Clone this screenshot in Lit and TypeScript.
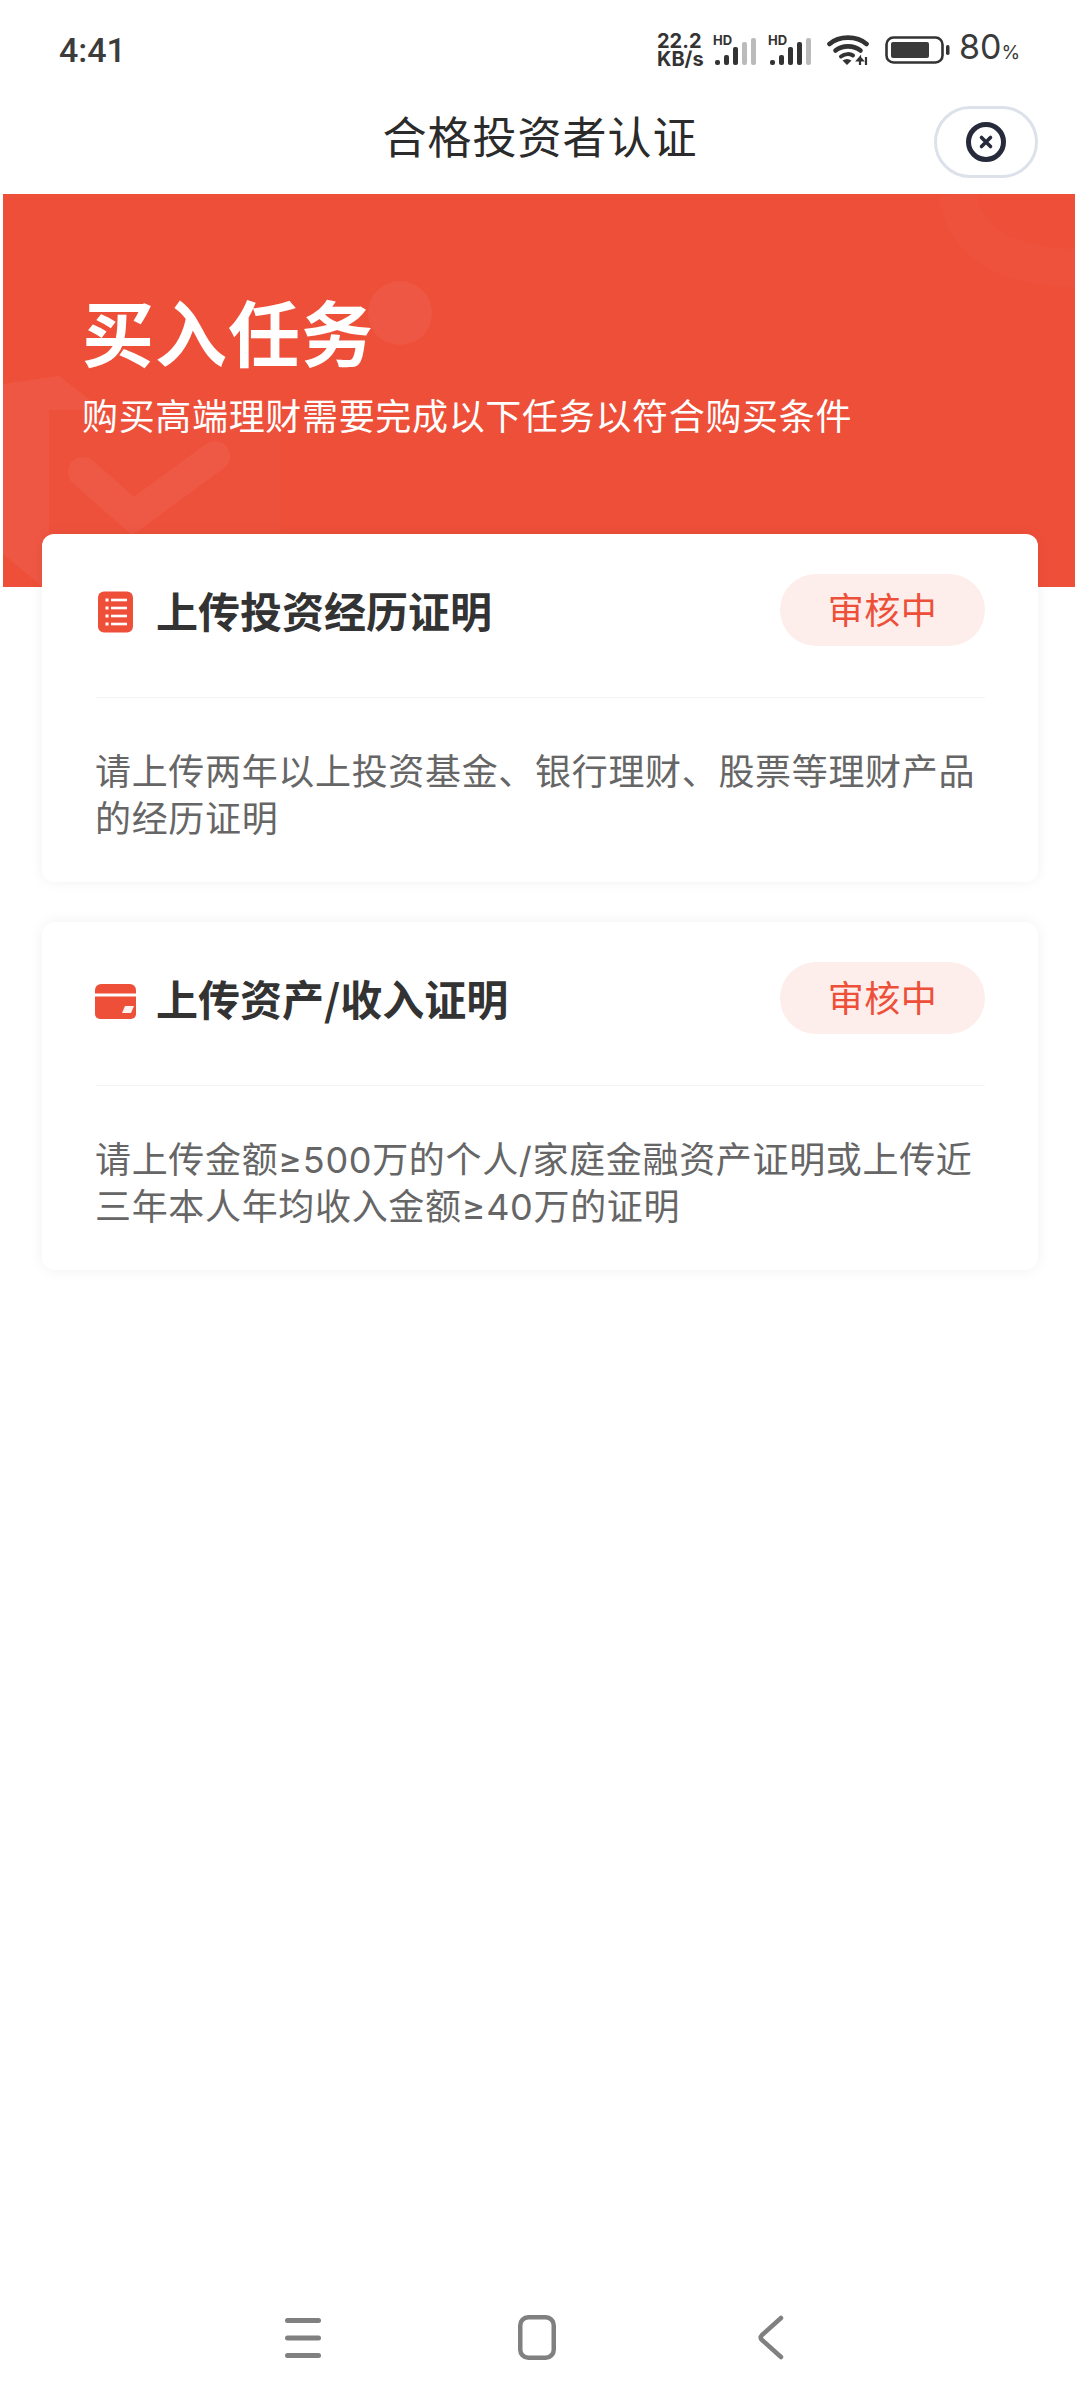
import { LitElement, css, html, svg } from "lit"
import { customElement } from "lit/decorators.js"

const tasks = [
  {
    icon: "list",
    title: "上传投资经历证明",
    lines: ["请上传两年以上投资基金、银行理财、股票等理财产品", "的经历证明"],
    status: "审核中",
  },
  {
    icon: "card",
    title: "上传资产/收入证明",
    lines: ["请上传金额≥500万的个人/家庭金融资产证明或上传近", "三年本人年均收入金额≥40万的证明"],
    status: "审核中",
  },
]

// 五格信号，dark 表示深色格数
const signal = (dark: number) =>
  [5, 10, 18, 23, 27].map(
    (h, i) => svg`<rect x="${i * 9}" y="${27 - h}" width="5" height="${h}" rx="2" fill="${i < dark ? "#333" : "#bbb"}"/>`
  )

@customElement("app-root")
export class AppRoot extends LitElement {
  renderStatusIcons() {
    return html`
      <div class="speed">${"22.2\nKB/s"}</div>
      <div class="sig">
        <span class="hd">HD</span>
        <svg width="42" height="27" viewBox="0 0 42 27">${signal(3)}</svg>
      </div>
      <div class="sig">
        <span class="hd">HD</span>
        <svg width="42" height="27" viewBox="0 0 42 27">${signal(4)}</svg>
      </div>
      <svg class="wifi" width="44" height="31" viewBox="0 0 44 31" fill="none" stroke="#333" stroke-linecap="round">
        <path d="M2.5 9C12 0.5 30 0.5 39.5 9" stroke-width="4.6"/>
        <path d="M8.5 15.5C15 10 27 10 33.5 15.5" stroke-width="4.6"/>
        <path d="M14 21.5C18 18.5 23 18.5 26 20.5" stroke-width="4"/>
        <path d="M15.5 25.5Q20 22.5 24.5 25.5L20 30Z" fill="#333" stroke="none"/>
        <path d="M33 30V22.5L30.5 25.5H35.5L33 22.5M39 22V30" stroke-width="2.2" stroke-linecap="butt"/>
      </svg>
      <svg class="battery" width="65" height="28" viewBox="0 0 65 28">
        <rect x="1.5" y="1.5" width="56" height="25" rx="7" fill="none" stroke="#333" stroke-width="2.6"/>
        <rect x="6" y="6" width="38" height="16" rx="2" fill="#3a3a3a"/>
        <rect x="61" y="9" width="3.5" height="10" rx="1.7" fill="#333"/>
      </svg>
      <div class="pct">80<small>%</small></div>
    `
  }

  renderIcon(kind: string) {
    if (kind === "list") {
      return html`<svg class="task-icon list" width="42" height="44" viewBox="0 0 42 44">
        <rect x="4" y="1.5" width="35" height="41" rx="6" fill="#ee4f39"/>
        ${[10, 18, 26, 34].map(
          (y) => svg`
            <rect x="11.5" y="${y - 1.5}" width="3" height="3" fill="#fff"/>
            <rect x="17" y="${y - 1.3}" width="16" height="2.6" fill="#fff"/>
          `
        )}
      </svg>`
    }
    return html`<svg class="task-icon bank" width="44" height="44" viewBox="0 0 44 44">
      <path d="M1 10a6 6 0 0 1 6-6h29a6 6 0 0 1 6 6v3.5H1Z" fill="#ee4f39"/>
      <path d="M1 16.5h41V34a5 5 0 0 1-5 5H6a5 5 0 0 1-5-5Z" fill="#ee4f39"/>
      <path d="M31 26h9l-3 7h-9Z" fill="#fff" opacity=".92"/>
    </svg>`
  }

  render() {
    return html`
      <div class="status">
        <div class="time">4:41</div>
        <div class="status-right">${this.renderStatusIcons()}</div>
      </div>
      <div class="nav">
        <div class="nav-title">合格投资者认证</div>
        <div class="capsule">
          <svg width="42" height="42" viewBox="0 0 42 42" fill="none" stroke="#262a3a">
            <circle cx="21" cy="21" r="17.5" stroke-width="5"/>
            <path d="M16.5 16.5L25.5 25.5M25.5 16.5L16.5 25.5" stroke-width="3.6" stroke-linecap="round"/>
          </svg>
        </div>
      </div>
      <div class="banner">
        <svg class="decor" width="1072" height="393" viewBox="0 0 1072 393" fill="none">
          <circle cx="397" cy="119" r="32" fill="#fff" opacity=".05"/>
          <path d="M0 190L56 182L100 216H46V334Q46 356 70 372L100 393H40L0 360Z" fill="#fff" opacity=".05"/>
          <path d="M46 216H278V393H46Z" fill="#fff" opacity=".01"/>
          <path d="M80 278L130 322L212 262" stroke="#fff" stroke-opacity=".05" stroke-width="30" stroke-linecap="round"/>
          <path d="M954 0Q966 72 1072 74" stroke="#fff" stroke-opacity=".02" stroke-width="38"/>
        </svg>
        <h1>买入任务</h1>
        <p>购买高端理财需要完成以下任务以符合购买条件</p>
      </div>
      <div class="tasks">
        ${tasks.map(
          (t) => html`
            <div class="card">
              <div class="card-head">
                <div class="icon-box">${this.renderIcon(t.icon)}</div>
                <div class="card-title">${t.title}</div>
                <div class="tag">${t.status}</div>
              </div>
              <div class="desc">${t.lines.map((l) => html`<div>${l}</div>`)}</div>
            </div>
          `
        )}
      </div>
      <div class="spacer"></div>
      <div class="navbar">
        <svg width="36" height="40" viewBox="0 0 36 40" fill="#808080">
          <rect x="0" y="0" width="36" height="5" rx="2.5"/>
          <rect x="0" y="17.5" width="36" height="5" rx="2.5"/>
          <rect x="0" y="35" width="36" height="5" rx="2.5"/>
        </svg>
        <svg width="38" height="45" viewBox="0 0 38 45" fill="none" stroke="#808080" stroke-width="4.5">
          <rect x="2.25" y="2.25" width="33.5" height="40.5" rx="8"/>
        </svg>
        <svg width="26" height="45" viewBox="0 0 26 45" fill="none" stroke="#808080" stroke-width="4.5" stroke-linecap="round" stroke-linejoin="round">
          <path d="M23 3L4 20Q1.5 22.5 4 25L23 42"/>
        </svg>
      </div>
    `
  }

  static styles = css`
    :host {
      display: flex;
      flex-direction: column;
      width: 1080px;
      height: 2400px;
      background: #fff;
      font-family: "Noto Sans CJK SC", "Noto Sans", sans-serif;
      overflow: hidden;
    }
    .status {
      height: 96px;
      display: flex;
      align-items: center;
      justify-content: space-between;
      padding: 4px 59px 0 59px;
      box-sizing: border-box;
      color: #333;
      flex: none;
    }
    .time {
      font-family: Roboto, sans-serif;
      font-size: 34px;
      font-weight: 500;
      color: #3c3c3c;
    }
    .status-right {
      display: flex;
      align-items: center;
    }
    .speed {
      white-space: pre-line;
      width: 48px;
      margin-right: 8px;
      font-family: Inter, sans-serif;
      font-size: 20px;
      line-height: 18px;
      font-weight: 700;
      color: #333;
    }
    .sig {
      position: relative;
      width: 46px;
      height: 30px;
      margin-right: 9px;
    }
    .sig svg {
      position: absolute;
      left: 2px;
      bottom: 0;
    }
    .hd {
      position: absolute;
      left: 0;
      top: -2px;
      font-family: Inter, sans-serif;
      font-size: 13px;
      line-height: 14px;
      font-weight: 700;
      color: #333;
    }
    .wifi {
      margin-left: 4px;
      margin-right: 14px;
    }
    .battery {
      margin-right: 9px;
    }
    .pct {
      font-family: Inter, sans-serif;
      font-size: 34px;
      line-height: 40px;
      color: #3a3a3a;
      white-space: nowrap;
      width: 62px;
    }
    .pct small {
      font-size: 19px;
    }
    .nav {
      position: relative;
      height: 98px;
      display: flex;
      align-items: center;
      justify-content: center;
      flex: none;
    }
    .nav-title {
      font-size: 44px;
      line-height: 60px;
      letter-spacing: 1px;
      color: #2b2b2b;
      margin-top: -20px;
    }
    .capsule {
      position: absolute;
      left: 934px;
      top: 10px;
      width: 104px;
      height: 72px;
      box-sizing: border-box;
      border: 3px solid #dce1ea;
      border-radius: 36px;
      display: flex;
      align-items: center;
      justify-content: center;
    }
    .banner {
      position: relative;
      flex: none;
      height: 393px;
      margin: 0 5px 0 3px;
      background: #ee4f39;
      color: #fff;
      box-sizing: border-box;
      padding: 94px 0 0 79px;
      overflow: hidden;
    }
    .decor {
      position: absolute;
      left: 0;
      top: 0;
    }
    .banner h1 {
      position: relative;
      margin: 0;
      font-size: 72px;
      line-height: 84px;
      font-weight: 700;
      letter-spacing: 1px;
    }
    .banner p {
      position: relative;
      margin: 17px 0 0;
      font-size: 36px;
      line-height: 50px;
      letter-spacing: 0.67px;
      font-weight: 400;
    }
    .tasks {
      display: flex;
      flex-direction: column;
      gap: 40px;
      margin: -53px 42px 0;
      position: relative;
    }
    .card {
      height: 348px;
      box-sizing: border-box;
      padding: 0 53px 0 54px;
      background: #fff;
      border-radius: 12px;
      box-shadow: 0 0 14px rgba(0, 0, 0, 0.06);
    }
    .card-head {
      height: 164px;
      display: flex;
      align-items: center;
      border-bottom: 1px solid #f3f3f3;
      padding-bottom: 12px;
      box-sizing: border-box;
    }
    .icon-box {
      width: 60px;
      display: flex;
      flex: none;
    }
    .task-icon {
      margin-left: -2px;
    }
    .task-icon.list {
      margin-top: 5px;
    }
    .task-icon.bank {
      margin-top: 9px;
    }
    .card-title {
      flex: 1;
      font-size: 42px;
      line-height: 56px;
      font-weight: 700;
      color: #333;
    }
    .tag {
      width: 205px;
      height: 72px;
      border-radius: 36px;
      background: #fdeeeb;
      color: #ee4f39;
      font-size: 36px;
      line-height: 68px;
      text-align: center;
      letter-spacing: 0.5px;
    }
    .desc {
      padding-top: 51px;
      margin-left: -1px;
      font-family: Inter, "Noto Sans CJK SC", sans-serif;
      font-size: 36px;
      line-height: 47px;
      letter-spacing: 0.67px;
      color: #666;
      white-space: nowrap;
    }
    .spacer {
      flex: 1;
    }
    .navbar {
      flex: none;
      height: 85px;
      display: grid;
      grid-template-columns: repeat(3, 234px);
      justify-content: center;
      justify-items: center;
      align-items: center;
      align-content: start;
      padding-right: 6px;
      box-sizing: border-box;
    }
  `
}
